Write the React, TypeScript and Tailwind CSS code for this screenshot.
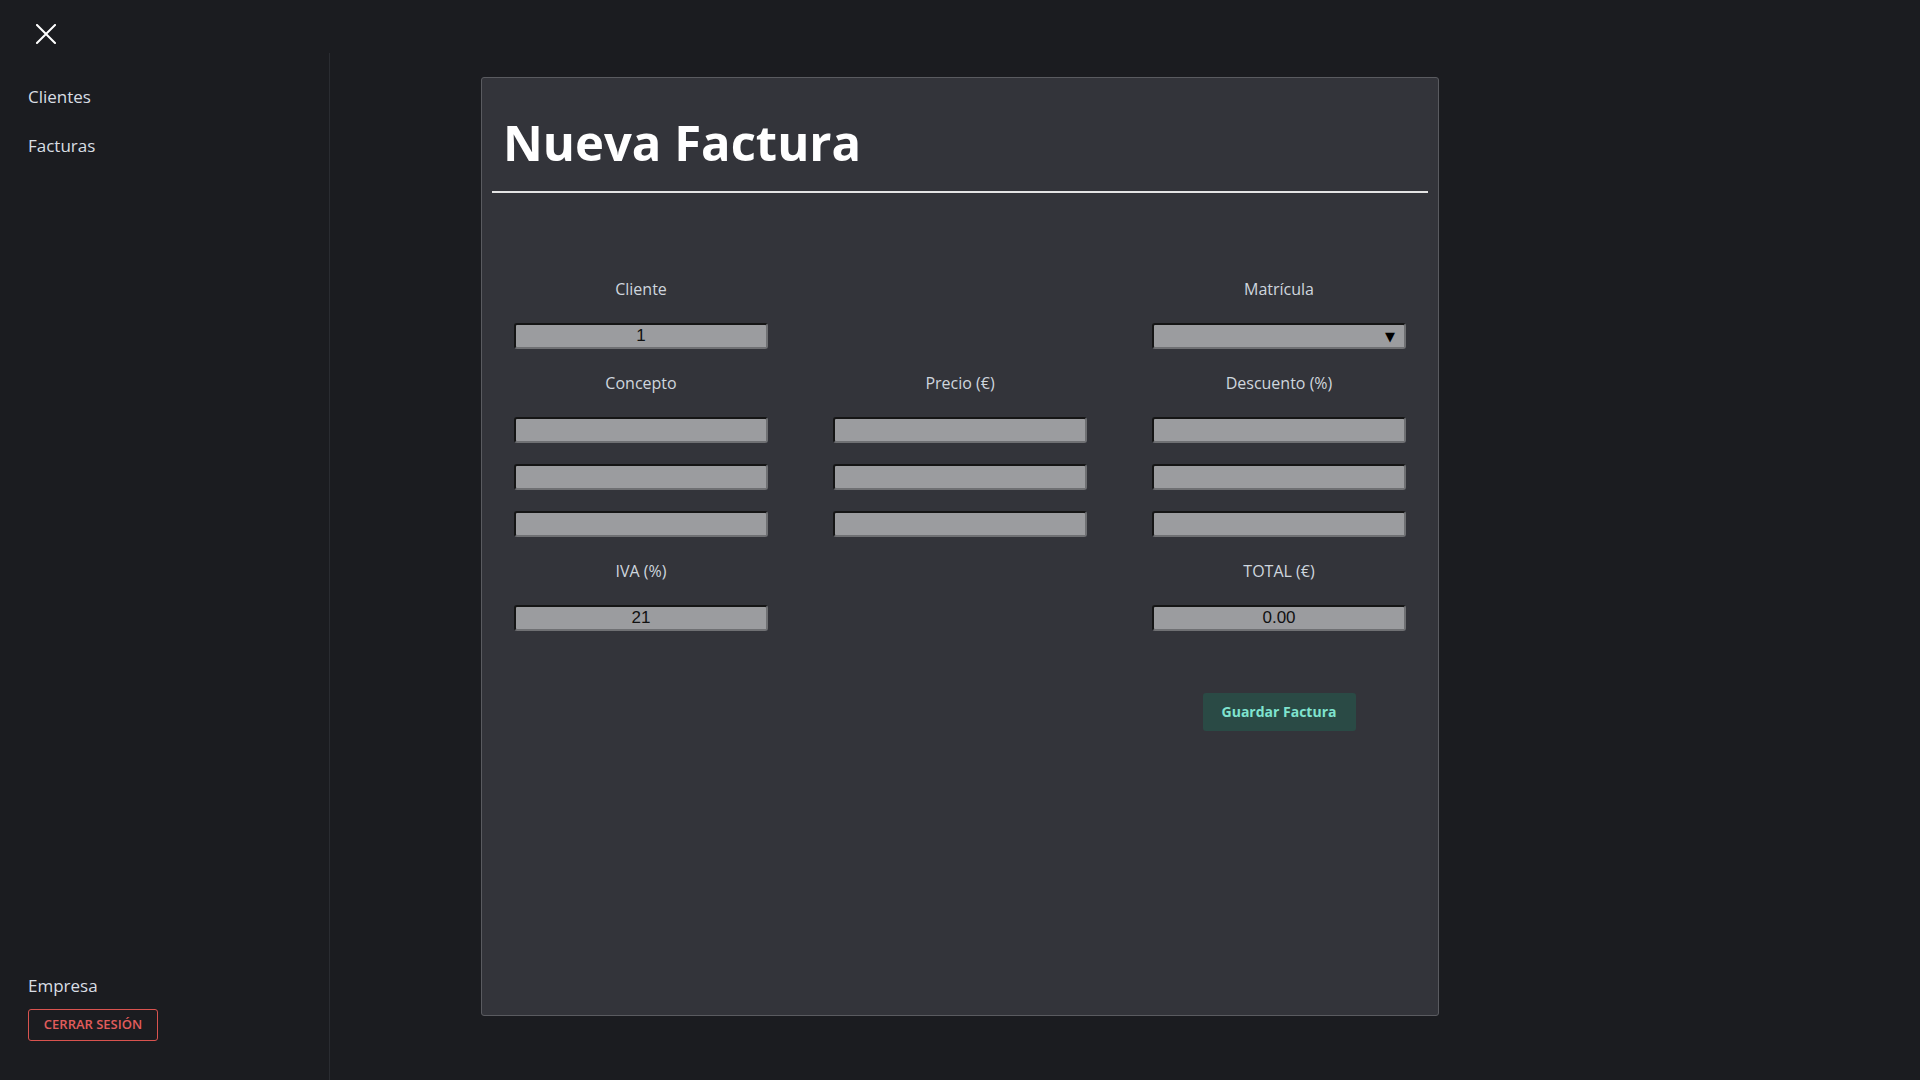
import React, { useState } from 'react';

const inputCls =
  'w-full h-[26px] bg-[#9b9c9f] text-[#111] text-center text-[17px] rounded-[3px] border-2 border-t-[#151515] border-l-[#151515] border-b-[#6f7073] border-r-[#6f7073] outline-none font-["Liberation_Sans",Arial,sans-serif]';

const Label: React.FC<{ children: React.ReactNode }> = ({ children }) => (
  <div className="h-[47px] flex items-center justify-center text-[16px] text-[#cfd6de]">{children}</div>
);

const Cell: React.FC<{ children?: React.ReactNode }> = ({ children }) => (
  <div className="h-[47px] flex items-center">{children}</div>
);

const App: React.FC = () => {
  const [cliente, setCliente] = useState('1');
  const [iva, setIva] = useState('21');

  return (
    <div className="flex h-screen w-full bg-[#1b1c20] font-['Open_Sans','Noto_Sans',sans-serif] overflow-hidden">
      {/* Sidebar */}
      <aside className="w-[330px] shrink-0 flex flex-col">
        <div className="h-[53px] pl-[36px] pt-[24px]">
          <svg width="20" height="20" viewBox="0 0 20 20" className="text-white">
            <path d="M1 1L19 19M19 1L1 19" stroke="currentColor" strokeWidth="2" strokeLinecap="square" fill="none" />
          </svg>
        </div>
        <div className="flex-1 flex flex-col justify-between border-r border-[#2a2c31] pb-[39px]">
          <nav className="flex flex-col pt-[19px] pl-[28px]">
            <a className="py-3 text-[17px] leading-[25px] text-[#d9dee4]">Clientes</a>
            <a className="py-3 text-[17px] leading-[25px] text-[#d9dee4]">Facturas</a>
          </nav>
          <div className="pl-[28px] flex flex-col items-start gap-[11px]">
            <span className="text-[17px] leading-[25px] text-[#d9dee4]">Empresa</span>
            <button className="w-[130px] h-[32px] border border-[#d9534f] rounded-[3px] text-[13px] font-semibold text-[#e25c5c]">
              CERRAR SESIÓN
            </button>
          </div>
        </div>
      </aside>

      {/* Main */}
      <main className="flex-1 pl-[151px] pt-[77px]">
        <div className="w-[958px] h-[939px] bg-[#33343a] border border-[#5a5b60] rounded-[3px] px-[10px]">
          <h1 className="pl-[11px] pt-[36px] pb-[21px] text-[49px] leading-[56px] font-bold text-white">Nueva Factura</h1>
          <hr className="border-0 h-[2px] bg-[#e4e4e4]" />

          <div className="mx-[22px] mt-[72px] grid grid-cols-[254px_254px_254px] gap-x-[65px]">
            <Label>Cliente</Label>
            <div />
            <Label>Matrícula</Label>

            <Cell>
              <input className={inputCls} value={cliente} onChange={e => setCliente(e.target.value)} />
            </Cell>
            <div />
            <Cell>
              <div className="relative w-full">
                <select className={`${inputCls} appearance-none`} defaultValue="">
                  <option value=""></option>
                </select>
                <span className="pointer-events-none absolute right-[11px] top-1/2 -translate-y-1/2 text-[13px] leading-none text-black font-['DejaVu_Sans',sans-serif]">▼</span>
              </div>
            </Cell>

            <Label>Concepto</Label>
            <Label>Precio (€)</Label>
            <Label>Descuento (%)</Label>

            {[0, 1, 2].map(i => (
              <React.Fragment key={i}>
                <Cell><input className={inputCls} /></Cell>
                <Cell><input className={inputCls} /></Cell>
                <Cell><input className={inputCls} /></Cell>
              </React.Fragment>
            ))}

            <Label>IVA (%)</Label>
            <div />
            <Label>TOTAL (€)</Label>

            <Cell>
              <input className={inputCls} value={iva} onChange={e => setIva(e.target.value)} />
            </Cell>
            <div />
            <Cell>
              <input className={inputCls} value="0.00" readOnly />
            </Cell>

            <div className="h-[47px]" />
            <div />
            <div />

            <div />
            <div />
            <div className="h-[47px] flex items-center justify-center">
              <button className="w-[153px] h-[38px] rounded-[3px] bg-[#2a4a45] text-[#7fe3cf] text-[14px] font-bold">
                Guardar Factura
              </button>
            </div>
          </div>
        </div>
      </main>
    </div>
  );
};

export default App;
